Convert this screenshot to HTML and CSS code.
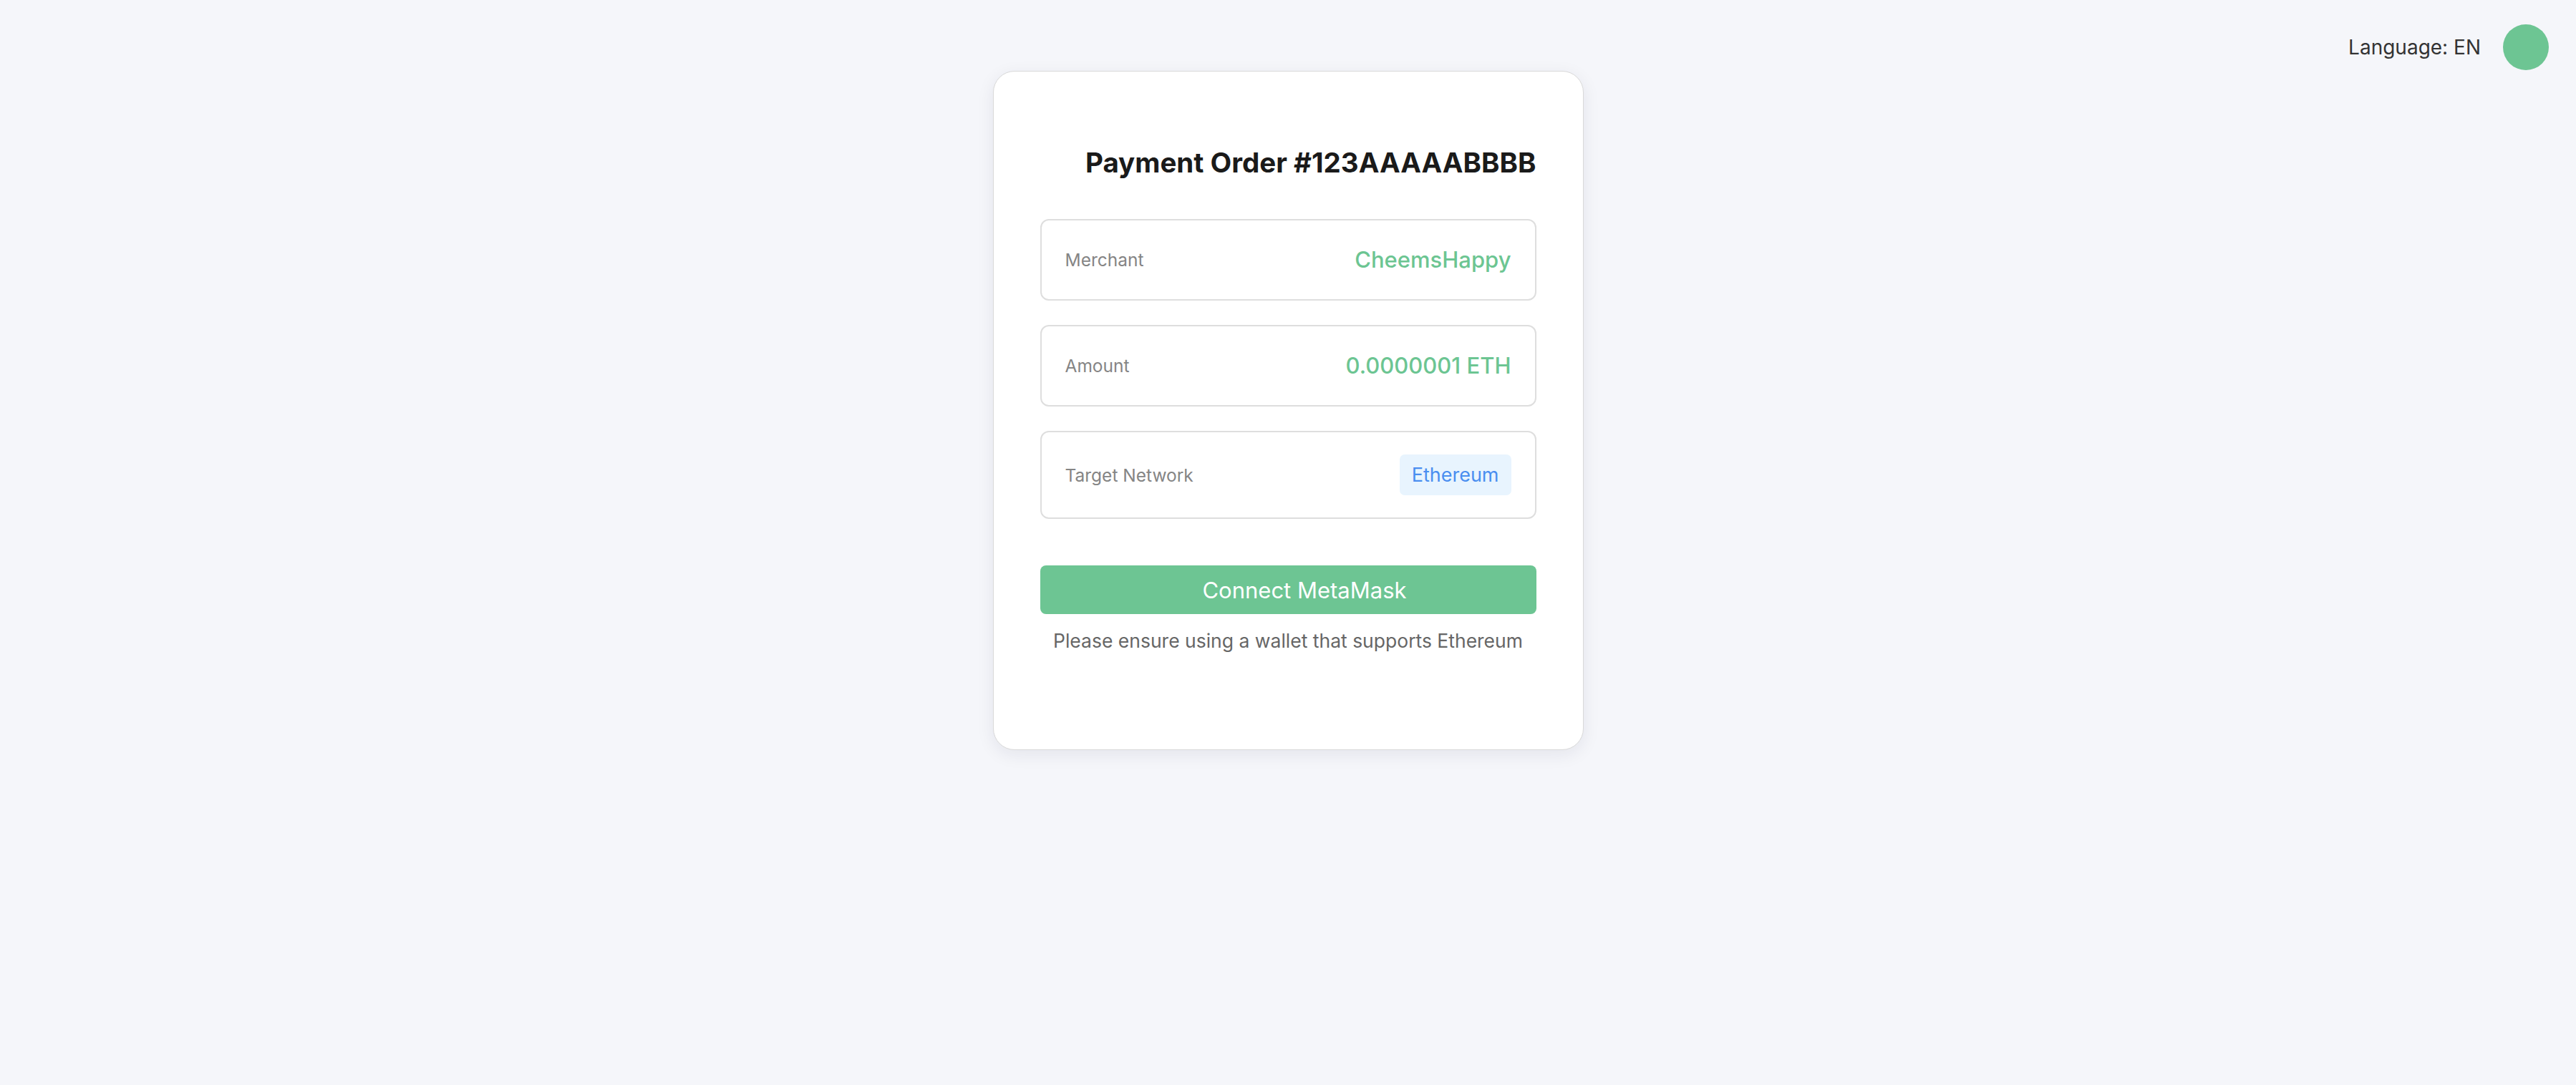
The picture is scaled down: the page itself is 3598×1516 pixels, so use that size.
FILE: index.html
```html
<!DOCTYPE html>
<html lang="en">
<head>
<meta charset="utf-8">
<title>Payment Order</title>
<link rel="stylesheet" href="styles.css">
</head>
<body>
<header class="topbar">
  <span class="lang">Language: EN</span>
  <span class="avatar"></span>
</header>
<main class="page">
  <section class="card">
    <div class="card-head">
      <h1 class="title">Payment Order #123AAAAABBBB</h1>
    </div>
    <div class="rows">
      <div class="row">
        <span class="label">Merchant</span>
        <span class="value">CheemsHappy</span>
      </div>
      <div class="row">
        <span class="label">Amount</span>
        <span class="value">0.0000001 ETH</span>
      </div>
      <div class="row">
        <span class="label">Target Network</span>
        <span class="badge">Ethereum</span>
      </div>
    </div>
    <button class="connect"><span class="icon-space"></span><span>Connect MetaMask</span></button>
    <p class="hint">Please ensure using a wallet that supports Ethereum</p>
  </section>
</main>
</body>
</html>
```
FILE: styles.css
```css
html, body {
  margin: 0;
  padding: 0;
}
body {
  background: #f5f6fa;
  font-family: Inter, "Noto Sans", "Liberation Sans", sans-serif;
  color: #222;
  min-height: 1516px;
}
.topbar {
  display: flex;
  justify-content: flex-end;
  align-items: center;
  gap: 31px;
  padding: 34px 38px 0 0;
  height: 64px;
}
.lang {
  font-size: 28px;
  color: #333;
}
.avatar {
  width: 64px;
  height: 64px;
  border-radius: 50%;
  background: #6dc593;
}
.page {
  display: flex;
  justify-content: center;
  padding-top: 1px;
}
.card {
  width: 825px;
  box-sizing: border-box;
  background: #fff;
  border: 1px solid #d9d9d9;
  border-radius: 30px;
  box-shadow: 0 6px 24px rgba(20, 30, 60, 0.08);
  padding: 104px 65px 132px;
}
.card-head {
  display: flex;
  justify-content: flex-end;
}
.title {
  margin: 0;
  font-size: 38.5px;
  line-height: 46px;
  font-weight: 700;
  color: #1a1a1a;
}
.rows {
  display: flex;
  flex-direction: column;
  gap: 34px;
  margin-top: 56px;
}
.row {
  display: flex;
  justify-content: space-between;
  align-items: center;
  border: 2px solid #dedede;
  border-radius: 12px;
  padding: 31px 33px;
  min-height: 48px;
}
.label {
  font-size: 24.5px;
  color: #858585;
}
.value {
  font-size: 31px;
  line-height: 48px;
  font-weight: 500;
  color: #6cc592;
}
.badge {
  font-size: 27px;
  line-height: 41px;
  padding: 8px 17px;
  border-radius: 7px;
  background: #e8f4fe;
  color: #4a8ef0;
}
.connect {
  display: flex;
  justify-content: center;
  align-items: center;
  width: 100%;
  height: 68px;
  margin-top: 65px;
  border: none;
  border-radius: 8px;
  background: #6dc593;
  color: #fff;
  font-family: inherit;
  font-size: 31px;
}
.icon-space {
  width: 46px;
}
.hint {
  margin: 17px 0 0;
  text-align: center;
  font-size: 26.5px;
  line-height: 40px;
  color: #666;
}
```
